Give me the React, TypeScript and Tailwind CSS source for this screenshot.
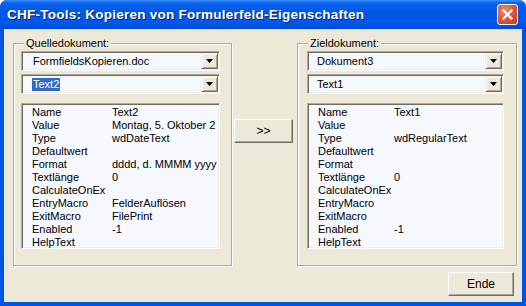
const FONT = { fontFamily: '"Liberation Sans", Arial, sans-serif' };

type Prop = [string, string];

const SOURCE_PROPS: Prop[] = [
  ['Name', 'Text2'],
  ['Value', 'Montag, 5. Oktober 2'],
  ['Type', 'wdDateText'],
  ['Defaultwert', ''],
  ['Format', 'dddd, d. MMMM yyyy'],
  ['Textlänge', '0'],
  ['CalculateOnEx', ''],
  ['EntryMacro', 'FelderAuflösen'],
  ['ExitMacro', 'FilePrint'],
  ['Enabled', '-1'],
  ['HelpText', ''],
];

const TARGET_PROPS: Prop[] = [
  ['Name', 'Text1'],
  ['Value', ''],
  ['Type', 'wdRegularText'],
  ['Defaultwert', ''],
  ['Format', ''],
  ['Textlänge', '0'],
  ['CalculateOnEx', ''],
  ['EntryMacro', ''],
  ['ExitMacro', ''],
  ['Enabled', '-1'],
  ['HelpText', ''],
];

function DropArrow() {
  return (
    <div className="flex h-full w-[17px] shrink-0 items-center justify-center border border-t-[#F1EFE2] border-l-[#F1EFE2] border-r-[#716F64] border-b-[#716F64] bg-[#ECE9D8] shadow-[inset_1px_1px_0_#fff,inset_-1px_-1px_0_#ACA899]">
      <svg width="7" height="4" viewBox="0 0 7 4">
        <path d="M0 0h7L3.5 4z" fill="#000" />
      </svg>
    </div>
  );
}

function ComboBox({ value, selected, width, pad }: { value: string; selected?: boolean; width: string; pad: string }) {
  return (
    <div
      className={`flex h-[20px] ${width} border border-t-[#ACA899] border-l-[#ACA899] border-r-white border-b-white bg-[#F5F8FD] p-[1px] shadow-[inset_1px_1px_0_#716F64,inset_-1px_-1px_0_#F1EFE2]`}
    >
      <div className={`flex flex-1 items-center ${pad} text-[11px] leading-[13px] text-black`}>
        {selected ? <span className="bg-[#316AC5] px-[1px] text-white">{value}</span> : <span>{value}</span>}
      </div>
      <DropArrow />
    </div>
  );
}

function PropList({ rows, width, col }: { rows: Prop[]; width: string; col: string }) {
  return (
    <div
      className={`mt-[9px] h-[146px] ${width} overflow-hidden border border-t-[#ACA899] border-l-[#ACA899] border-r-white border-b-white bg-[#F5F8FD] pt-[2px] shadow-[inset_1px_1px_0_#716F64,inset_-1px_-1px_0_#F1EFE2]`}
    >
      {rows.map(([k, v]) => (
        <div key={k} className="flex pl-[10px] text-[11px] leading-[13px] text-black">
          <span className={`${col} shrink-0`}>{k}</span>
          <span className="whitespace-nowrap">{v}</span>
        </div>
      ))}
    </div>
  );
}

function GroupBox({ label, width, children }: { label: string; width: string; children: React.ReactNode }) {
  return (
    <div
      className={`relative h-[223px] ${width} border border-[#ACA899] px-[7px] pt-[7px] shadow-[inset_1px_1px_0_#fff,1px_1px_0_#fff]`}
    >
      <span className="absolute -top-[7px] left-[10px] bg-[#ECE9D8] px-[2px] text-[11px] leading-[13px] text-black">
        {label}
      </span>
      {children}
    </div>
  );
}

function XpButton({ label, className }: { label: string; className: string }) {
  return (
    <button
      className={`${className} flex h-[24px] items-center justify-center border border-t-white border-l-white border-r-[#716F64] border-b-[#716F64] bg-[#ECE9D8] text-[12px] text-black shadow-[inset_-1px_-1px_0_#ACA899]`}
    >
      {label}
    </button>
  );
}

export default function App() {
  return (
    <div className="h-[306px] w-[526px] bg-white" style={FONT}>
      <div className="flex h-full w-full flex-col overflow-hidden rounded-t-[7px] bg-[#0054E3]">
        {/* Titelleiste */}
        <div className="flex h-[29px] shrink-0 items-center justify-between bg-[linear-gradient(to_bottom,#3D8FFF_0%,#0A63EE_10%,#0056E6_45%,#005AEE_75%,#0049D6_100%)] pl-[7px] pr-[8px]">
          <span className="pt-[1px] text-[13.5px] font-bold tracking-[0.25px] text-white [text-shadow:1px_1px_0_#0A1E6A]">
            CHF-Tools: Kopieren von Formulerfeld-Eigenschaften
          </span>
          <div className="flex h-[21px] w-[21px] items-center justify-center rounded-[3px] border border-white bg-[radial-gradient(circle_at_35%_30%,#F08A6C_0%,#E0522F_55%,#C63A18_100%)]">
            <svg width="11" height="11" viewBox="0 0 11 11">
              <path d="M1.5 1.5l8 8M9.5 1.5l-8 8" stroke="#fff" strokeWidth="2.2" strokeLinecap="square" />
            </svg>
          </div>
        </div>

        {/* Client */}
        <div className="mx-[4px] mb-[4px] flex flex-1 flex-col bg-[#ECE9D8] pl-[9px] pt-[14px]">
          <div className="flex">
            <GroupBox label="Quelledokument:" width="w-[219px]">
              <ComboBox value="FormfieldsKopieren.doc" width="w-[199px]" pad="pl-[10px]" />
              <div className="mt-[3px]">
                <ComboBox value="Text2" selected width="w-[199px]" pad="pl-[9px]" />
              </div>
              <PropList rows={SOURCE_PROPS} width="w-[199px]" col="w-[80px]" />
            </GroupBox>
            <div className="w-[65px] pl-[2px] pt-[76px]">
              <XpButton label=">>" className="w-[59px]" />
            </div>
            <GroupBox label="Zieldokument:" width="w-[220px]">
              <div className="pl-[2px]">
                <ComboBox value="Dokument3" width="w-[197px]" pad="pl-[8px]" />
                <div className="mt-[3px]">
                  <ComboBox value="Text1" width="w-[197px]" pad="pl-[8px]" />
                </div>
                <PropList rows={TARGET_PROPS} width="w-[197px]" col="w-[76px]" />
              </div>
            </GroupBox>
          </div>
          <div className="flex justify-end pr-[8px] pt-[6px]">
            <XpButton label="Ende" className="w-[66px]" />
          </div>
        </div>
      </div>
    </div>
  );
}
